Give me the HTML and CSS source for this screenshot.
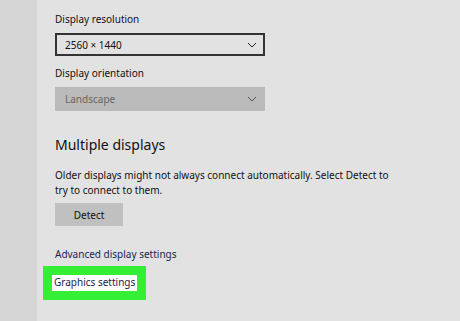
FILE: index.html
```html
<!DOCTYPE html>
<html lang="en">
<head>
    <meta charset="UTF-8">
    <title>Display</title>
<link rel="stylesheet" href="styles.css">
</head>
<body>
    <div class="window">
        <div class="sidebar"></div>
        <div class="content">
            <div class="field-label">Display resolution</div>
            <div class="dropdown">
                <span>2560 × 1440</span>
                <svg class="chevron" width="10" height="6" viewBox="0 0 10 6"><path d="M1 1 L5 5 L9 1" fill="none" stroke="#222" stroke-width="1"/></svg>
            </div>
            <div class="field-label">Display orientation</div>
            <div class="dropdown disabled">
                <span>Landscape</span>
                <svg class="chevron" width="10" height="6" viewBox="0 0 10 6"><path d="M1 1 L5 5 L9 1" fill="none" stroke="#555" stroke-width="1"/></svg>
            </div>
            <h2 class="section-title">Multiple displays</h2>
            <p class="section-text">Older displays might not always connect automatically. Select Detect to try to connect to them.</p>
            <button class="detect-button">Detect</button>
            <a class="link advanced">Advanced display settings</a>
            <div class="highlight">
                <a class="link graphics">Graphics settings</a>
            </div>
        </div>
    </div>
</body>
</html>
```

FILE: styles.css
```css
* {
    margin: 0;
    padding: 0;
    box-sizing: border-box;
}
body {
    font-family: "Noto Sans", "Open Sans", sans-serif;
    background-color: #e2e2e2;
    color: #111;
}
.window {
    display: flex;
    height: 321px;
}
.sidebar {
    width: 37px;
    background-color: #d5d5d5;
}
.content {
    flex-grow: 1;
    padding: 11px 0 0 18px;
    display: flex;
    flex-direction: column;
    align-items: flex-start;
}
.field-label {
    font-size: 10px;
    line-height: 16px;
    margin-bottom: 6px;
}
.dropdown {
    width: 210px;
    height: 23px;
    border: 2px solid #333;
    display: flex;
    align-items: center;
    justify-content: space-between;
    padding: 0 6px 0 8px;
    font-size: 10px;
    margin-bottom: 9px;
}
.dropdown.disabled {
    border: none;
    height: 24px;
    background-color: #bababa;
    color: #666;
    padding: 0 8px 0 10px;
}
.section-title {
    font-size: 14px;
    font-weight: normal;
    line-height: 22px;
    margin-top: 14px;
}
.section-text {
    font-size: 10px;
    line-height: 15px;
    width: 340px;
    margin-top: 12px;
}
.detect-button {
    width: 68px;
    height: 23px;
    border: none;
    background-color: #c0c0c0;
    font-family: inherit;
    font-size: 10px;
    color: #111;
    margin-top: 5px;
}
.link {
    font-size: 10px;
    line-height: 15px;
    color: #1c2350;
}
.advanced {
    margin-top: 21px;
}
.highlight {
    margin: 4px 0 0 -12px;
    width: 103px;
    height: 34px;
    background-color: #35ef35;
    padding: 9px 0 0 9px;
}
.graphics {
    display: block;
    width: 85px;
    height: 16px;
    white-space: nowrap;
    background-color: #ffffff;
    padding-left: 2px;
}
```
